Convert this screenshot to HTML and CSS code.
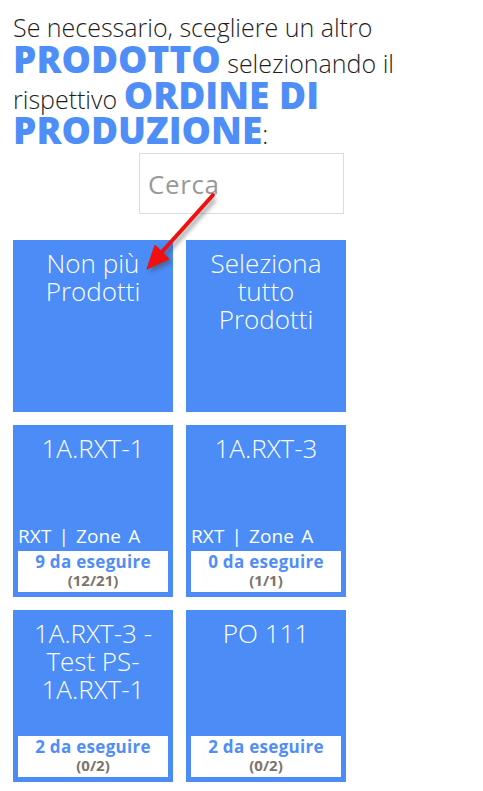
FILE: index.html
```html
<!DOCTYPE html>
<html lang="it">
<head>
<meta charset="utf-8">
<link rel="stylesheet" href="styles.css">
</head>
<body>
<div class="page">
  <p class="intro">Se necessario, scegliere un altro <strong>PRODOTTO</strong> selezionando il rispettivo <strong>ORDINE DI PRODUZIONE</strong>:</p>
  <div class="search-wrap">
    <div class="search">Cerca</div>
  </div>
  <div class="grid">
    <div class="tile"><div class="title">Non più Prodotti</div></div>
    <div class="tile"><div class="title">Seleziona tutto Prodotti</div></div>
    <div class="tile">
      <div class="title">1A.RXT-1</div>
      <div class="zone">RXT | Zone A</div>
      <div class="count"><span class="todo">9 da eseguire</span><span class="ratio">(12/21)</span></div>
    </div>
    <div class="tile">
      <div class="title">1A.RXT-3</div>
      <div class="zone">RXT | Zone A</div>
      <div class="count"><span class="todo">0 da eseguire</span><span class="ratio">(1/1)</span></div>
    </div>
    <div class="tile">
      <div class="title">1A.RXT-3 - Test PS-1A.RXT-1</div>
      <div class="count"><span class="todo">2 da eseguire</span><span class="ratio">(0/2)</span></div>
    </div>
    <div class="tile">
      <div class="title">PO 111</div>
      <div class="count"><span class="todo">2 da eseguire</span><span class="ratio">(0/2)</span></div>
    </div>
  </div>
  <svg class="arrow" width="483" height="300" viewBox="0 0 483 300">
    <defs>
      <filter id="sh" x="-50%" y="-50%" width="200%" height="200%">
        <feGaussianBlur stdDeviation="2"/>
      </filter>
    </defs>
    <g fill="#444" stroke="#444" opacity="0.5" filter="url(#sh)" transform="translate(3,3)">
      <line x1="212" y1="196" x2="162" y2="252" stroke-width="4"/>
      <polygon points="147,269 169,259 155,245"/>
    </g>
    <g fill="#f01010" stroke="#f01010">
      <line x1="213" y1="195" x2="161" y2="253" stroke-width="4" stroke-linecap="round"/>
      <polygon points="147,269 169,259 155,245" stroke-width="1" stroke-linejoin="round"/>
    </g>
  </svg>
</div>
</body>
</html>
```
FILE: styles.css
```css
html, body {
  margin: 0;
  padding: 0;
  background: #fff;
}
.page {
  position: relative;
  padding: 10px 13px 0 13px;
  font-family: "Open Sans", "Liberation Sans", sans-serif;
}
.intro {
  margin: 0;
  font-size: 25px;
  font-weight: 300;
  line-height: 35.75px;
  color: #1e1e1e;
}
.intro strong {
  font-size: 37px;
  font-weight: 800;
  line-height: 26px;
  color: #4f8ef7;
}
.search-wrap {
  display: flex;
  justify-content: center;
}
.search {
  width: 195px;
  height: 59px;
  border: 1px solid #dcdcdc;
  padding-left: 8px;
  display: flex;
  align-items: center;
  font-size: 26px;
  letter-spacing: 0.6px;
  font-weight: 400;
  color: #999;
  box-sizing: content-box;
}
.grid {
  margin-top: 26px;
  display: grid;
  grid-template-columns: 160px 160px;
  grid-auto-rows: 172px;
  gap: 13px;
}
.tile {
  background: #4b8cf6;
  color: #fff;
  display: flex;
  flex-direction: column;
  padding: 9px 5px 5px 5px;
  box-sizing: border-box;
}
.title {
  text-align: center;
  font-size: 26px;
  font-weight: 300;
  line-height: 28px;
  padding: 0 4px;
}
.zone {
  margin-top: auto;
  font-size: 19px;
  font-weight: 400;
  letter-spacing: 0.1px;
  word-spacing: 2px;
  line-height: 20px;
  margin-bottom: 5px;
  white-space: nowrap;
}
.count {
  background: #fff;
  height: 41px;
  box-sizing: border-box;
  padding-top: 1px;
  display: flex;
  flex-direction: column;
  align-items: center;
}
.title + .count {
  margin-top: auto;
}
.todo {
  font-size: 17px;
  font-weight: 700;
  letter-spacing: 0.3px;
  color: #4f8ef7;
  line-height: 20px;
}
.ratio {
  font-size: 15px;
  font-weight: 700;
  color: #7a746c;
  line-height: 16px;
}
.arrow {
  position: absolute;
  left: 0;
  top: 0;
  pointer-events: none;
}
```
